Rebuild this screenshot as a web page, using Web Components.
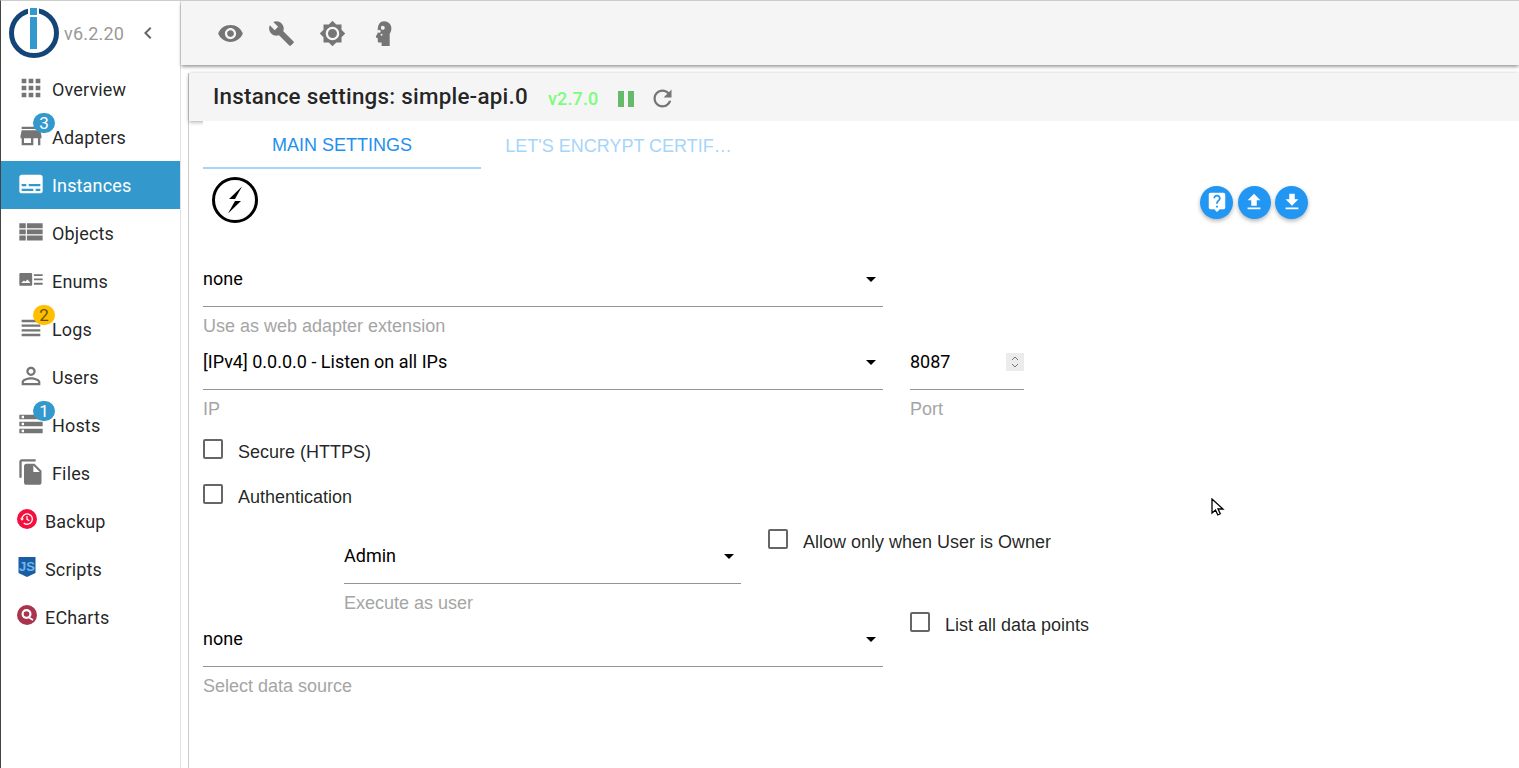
<!DOCTYPE html>
<html>
<head>
<meta charset="utf-8">
<title>Instance settings</title>
<style>
  html, body { margin: 0; height: 100%; }
  body { font-family: Roboto, "Liberation Sans", sans-serif; overflow: hidden; }
</style>
</head>
<body>
<x-app>
  <x-side slot="side">
    <x-nav label="Overview"><svg viewBox="0 0 24 24"><path d="M4 8h4V4H4v4zm6 12h4v-4h-4v4zm-6 0h4v-4H4v4zm0-6h4v-4H4v4zm6 0h4v-4h-4v4zm6-10v4h4V4h-4zm-6 4h4V4h-4v4zm6 6h4v-4h-4v4zm0 6h4v-4h-4v4z"/></svg></x-nav>
    <x-nav label="Adapters" badge="3"><svg viewBox="0 0 24 24"><path d="M20 4H4v2h16V4zm1 10v-2l-1-5H4l-1 5v2h1v6h10v-6h4v6h2v-6h1zm-9 4H6v-4h6v4z"/></svg></x-nav>
    <x-nav label="Instances" active><svg viewBox="0 0 24 24"><path d="M20 4H4c-1.1 0-2 .9-2 2v12c0 1.1.9 2 2 2h16c1.1 0 2-.9 2-2V6c0-1.1-.9-2-2-2zM4 12h4v2H4v-2zm10 6H4v-2h10v2zm6 0h-4v-2h4v2zm0-4H10v-2h10v2z"/></svg></x-nav>
    <x-nav label="Objects"><svg viewBox="0 0 24 24"><path d="M2 4.500h5.500v4.200H2zM8.500 4.500H22v4.200H8.500zM2 9.800h5.500V14H2zM8.500 9.800H22V14H8.500zM2 15.100h5.500v4.200H2zM8.500 15.100H22v4.200H8.500z"/></svg></x-nav>
    <x-nav label="Enums"><svg viewBox="0 0 24 24"><path fill-rule="evenodd" d="M3 6h9a1 1 0 0 1 1 1v9a1 1 0 0 1-1 1H3a1 1 0 0 1-1-1V7a1 1 0 0 1 1-1zM3.500 14.500h8L9 11.500l-2 2-1-1z"/><path d="M14.500 7H22v1.600h-7.500zM14.500 10.700H22v1.600h-7.500zM14.500 14.400H22V16h-7.500z"/></svg></x-nav>
    <x-nav label="Logs" badge="2" badge-color="warn"><svg viewBox="0 0 24 24"><path d="M4 15h16v-2H4v2zm0 4h16v-2H4v2zm0-8h16V9H4v2zm0-6v2h16V5H4z"/></svg></x-nav>
    <x-nav label="Users"><svg viewBox="0 0 24 24"><path d="M12 5.900c1.160 0 2.100.94 2.100 2.100s-.94 2.100-2.100 2.100S9.900 9.160 9.900 8s.94-2.100 2.100-2.100m0 9c2.970 0 6.100 1.460 6.100 2.100v1.100H5.900V17c0-.64 3.130-2.100 6.100-2.100M12 4C9.790 4 8 5.790 8 8s1.790 4 4 4 4-1.790 4-4-1.790-4-4-4zm0 9c-2.670 0-8 1.340-8 4v3h16v-3c0-2.660-5.330-4-8-4z"/></svg></x-nav>
    <x-nav label="Hosts" badge="1"><svg viewBox="0 0 24 24"><path d="M2 20h20v-4H2v4zm2-3h2v2H4v-2zM2 4v4h20V4H2zm4 3H4V5h2v2zm-4 7h20v-4H2v4zm2-3h2v2H4v-2z"/></svg></x-nav>
    <x-nav label="Files"><svg viewBox="0 0 24 24"><path d="M16 1H4c-1.100 0-2 .9-2 2v14h2V3h12V1zm-1 4l6 6v10c0 1.100-.9 2-2 2H7.990C6.890 23 6 22.100 6 21l.01-14c0-1.100.89-2 1.990-2h7zm-1 7h5.500L14 6.500V12z"/></svg></x-nav>
    <x-nav label="Backup" small><svg viewBox="0 0 20 20" style="fill:none"><circle cx="10" cy="10" r="10" fill="#f50f3e"/><path d="M5 10a5.200 5.200 0 1 1 1.700 3.900" stroke="#fff" stroke-width="1.300"/><path d="M3 9.400h4L5 11.800z" fill="#fff"/><path d="M10 7v3.400l2.400 1.300" stroke="#fff" stroke-width="1.200"/></svg></x-nav>
    <x-nav label="Scripts" small><svg viewBox="0 0 20 20"><path d="M1.500 0h17v16l-8.500 4-8.500-4z" fill="#1b5da3"/><text x="10" y="14" text-anchor="middle" font-family="Liberation Sans" font-weight="700" font-size="13" fill="#6db8f0">JS</text></svg></x-nav>
    <x-nav label="ECharts" small><svg viewBox="0 0 20 20"><circle cx="10" cy="10" r="10" fill="#aa344d"/><circle cx="9.500" cy="9" r="5" fill="#fff"/><circle cx="9.500" cy="9" r="2.800" fill="#aa344d"/><path d="M12 12.500l4 2.500" stroke="#fff" stroke-width="1.500"/></svg></x-nav>
  </x-side>
  <x-toolbar slot="toolbar">
    <svg viewBox="0 0 24 24"><path d="M12 4.500C7 4.500 2.730 7.610 1 12c1.730 4.390 6 7.500 11 7.500s9.270-3.110 11-7.500c-1.730-4.390-6-7.500-11-7.500zM12 17c-2.760 0-5-2.240-5-5s2.240-5 5-5 5 2.240 5 5-2.240 5-5 5zm0-8c-1.660 0-3 1.340-3 3s1.340 3 3 3 3-1.340 3-3-1.340-3-3-3z"/></svg>
    <svg viewBox="0 0 24 24"><path d="M22.700 19l-9.100-9.100c.9-2.300.4-5-1.500-6.900-2-2-5-2.400-7.400-1.300L9 6 6 9 1.600 4.700C.4 7.100.9 10.100 2.900 12.100c1.900 1.900 4.600 2.400 6.900 1.500l9.100 9.100c.4.4 1 .4 1.400 0l2.300-2.300c.5-.4.5-1.100.1-1.400z"/></svg>
    <svg viewBox="0 0 24 24"><path d="M20 8.690V4h-4.690L12 .69 8.690 4H4v4.690L.69 12 4 15.310V20h4.690L12 23.310 15.310 20H20v-4.690L23.310 12 20 8.690zM12 18c-3.310 0-6-2.690-6-6s2.690-6 6-6 6 2.690 6 6-2.690 6-6 6zm0-10c-2.210 0-4 1.790-4 4s1.790 4 4 4 4-1.790 4-4-1.790-4-4-4z"/></svg>
    <svg viewBox="0 0 24 24"><path fill-rule="evenodd" d="M12.500 1c3.700 0 6.500 2.700 6.500 6.300 0 2.300-.7 3.700-1.500 5V23H10.300v-2.900H8.200c-.9 0-1.300-.6-1.300-1.300v-2.600l-1.400-.7c-.4-.2-.4-.6-.2-1l1.600-2.900V8.500C6.900 4 9 1 12.500 1zM8.500 8.800a1.300 1.300 0 1 0 .1 2.500 1.300 1.300 0 0 0-.1-2.500zM11.800 5.300a1.700 1.700 0 1 0 .1 3.300 1.700 1.700 0 0 0-.1-3.300zM10.300 12.200a.8.8 0 1 0 0 1.700.8.8 0 0 0 0-1.700z"/></svg>
  </x-toolbar>
  <x-panel slot="main" heading="Instance settings: simple-api.0" version="v2.7.0">
    <x-tabs>
      <span active>MAIN SETTINGS</span>
      <span style="padding-right:3px">LET'S ENCRYPT CERTIF…</span>
    </x-tabs>
    <x-logobar>
      <x-fab><svg viewBox="0 0 24 24"><path d="M19 2H5c-1.110 0-2 .9-2 2v14c0 1.100.89 2 2 2h4l3 3 3-3h4c1.100 0 2-.9 2-2V4c0-1.100-.9-2-2-2zm-6 16h-2v-2h2v2zm2.070-7.750l-.9.92C13.450 11.900 13 12.500 13 14h-2v-.5c0-1.100.45-2.100 1.170-2.830l1.240-1.260c.37-.36.59-.86.59-1.410 0-1.100-.9-2-2-2s-2 .9-2 2H8c0-2.210 1.790-4 4-4s4 1.790 4 4c0 .88-.36 1.680-.93 2.250z"/></svg></x-fab>
      <x-fab><svg viewBox="0 0 24 24"><path d="M9 16h6v-6h4l-7-7-7 7h4zm-4 2h14v2H5z"/></svg></x-fab>
      <x-fab><svg viewBox="0 0 24 24"><path d="M19 9h-4V3H9v6H5l7 7 7-7zM5 18v2h14v-2H5z"/></svg></x-fab>
    </x-logobar>
    <x-form>
      <x-row><x-field value="none" label="Use as web adapter extension"></x-field></x-row>
      <x-row gap="27">
        <x-field value="[IPv4] 0.0.0.0 - Listen on all IPs" label="IP"></x-field>
        <x-field value="8087" label="Port" width="114" number></x-field>
      </x-row>
      <x-check label="Secure (HTTPS)" style="margin-top:14px"></x-check>
      <x-check label="Authentication" style="margin-top:23px"></x-check>
      <x-row gap="27" style="margin:30px 0 0 141px">
        <x-field value="Admin" label="Execute as user" width="397"></x-field>
        <x-check label="Allow only when User is Owner" style="margin-top:-7px"></x-check>
      </x-row>
      <x-row gap="27">
        <x-field value="none" label="Select data source"></x-field>
        <x-check label="List all data points" style="margin-top:-7px"></x-check>
      </x-row>
    </x-form>
  </x-panel>
</x-app>
<script>
const define = (name, css, html, setup) => {
  customElements.define(name, class extends HTMLElement {
    connectedCallback() {
      if (this.shadowRoot) return;
      this.attachShadow({ mode: 'open' });
      const a = n => this.getAttribute(n) || '';
      this.shadowRoot.innerHTML = `<style>${css}</style>` + (typeof html === 'function' ? html(a, this) : html);
      if (setup) setup(this);
    }
  });
};

define('x-app', `
  :host { display: grid; grid-template-columns: 180px 1fr; grid-template-rows: 64px 1fr; height: 100vh;
    border-top: 1px solid #ccc; border-left: 1px solid #444; box-sizing: border-box; background: #fff; overflow: hidden; }
  .side { grid-row: 1 / 3; display: block; }
  .bar { position: relative; z-index: 2; }
  .main { min-width: 0; }
`, `
  <div class="side"><slot name="side"></slot></div>
  <div class="bar"><slot name="toolbar"></slot></div>
  <div class="main"><slot name="main"></slot></div>
`);

define('x-side', `
  :host { display: block; width: 179px; height: 100%; border-right: 1px solid #e0e0e0; }
  header { height: 64px; display: flex; align-items: center; padding-left: 8px; box-sizing: border-box; }
  header svg.logo { width: 50px; height: 50px; flex: none; }
  header span { color: #999; font-size: 18px; margin-left: 5px; letter-spacing: .2px; }
  header svg.back { width: 24px; height: 24px; fill: #666; margin-left: 12px; }
`, `
  <header>
    <svg class="logo" viewBox="0 0 50 50">
      <circle cx="25" cy="25" r="22.500" fill="none" stroke="#144578" stroke-width="5"/>
      <rect x="19" y="0" width="11" height="7" fill="#fff"/>
      <rect x="21" y="0" width="7" height="7" fill="#39c"/>
      <rect x="21" y="9" width="7" height="32" fill="#39c"/>
    </svg>
    <span>v6.2.20</span>
    <svg class="back" viewBox="0 0 24 24"><path d="M15.410 7.410 14 6l-6 6 6 6 1.410-1.410L10.830 12z"/></svg>
  </header>
  <slot></slot>
`);

define('x-nav', `
  :host { display: flex; height: 48px; align-items: center; position: relative; color: rgba(0,0,0,.87); box-sizing: border-box; }
  :host([active]) { background: #39c; color: #fff; }
  .ic { width: 28px; height: 28px; margin: -3px 7px 0 16px; flex: none; fill: #757575; }
  :host([active]) .ic { fill: #fff; }
  :host([small]) .ic { width: 20px; height: 20px; margin: -4px 8px 0 16px; }
  .ic ::slotted(svg) { display: block; width: 100%; height: 100%; fill: inherit; }
  .t { font-size: 18px; letter-spacing: .15px; }
  .b { position: absolute; left: 32px; top: 0; width: 22px; height: 20px; border-radius: 11px; background: #39c; color: #fff;
    font-size: 17px; line-height: 20px; text-align: center; }
  .b.warn { background: #ffbf00; color: #6b5200; }
`, (a, el) => `
  <div class="ic"><slot></slot></div>
  <span class="t">${a('label')}</span>
  ${a('badge') ? `<span class="b ${a('badge-color')}">${a('badge')}</span>` : ''}
`);

define('x-toolbar', `
  :host { display: flex; align-items: center; gap: 24px; height: 64px; padding-left: 36px; box-sizing: border-box; background: #f5f5f5;
    box-shadow: 0 2px 4px -1px rgba(0,0,0,.3), 0 2px 3px rgba(0,0,0,.2); }
  ::slotted(svg) { width: 27px; height: 27px; fill: #757575; display: block; }
`, `<slot></slot>`);

define('x-panel', `
  :host { display: block; margin: 8px 0 0 7px; border-left: 1px solid #ccc; height: calc(100% - 8px); }
  .title { height: 48px; background: #f5f5f5; display: flex; align-items: center; padding-left: 24px; border-top-left-radius: 4px;
    box-shadow: 0 1px 4px rgba(0,0,0,.35); }
  h1 { margin: -2px 0 0; font-size: 22.400px; font-weight: 500; color: rgba(0,0,0,.87); letter-spacing: .23px; }
  .v { font-size: 18px; font-weight: 500; color: #7cfc7c; margin: 2px 0 0 20px; letter-spacing: .15px; }
  .pause { width: 16px; height: 16px; margin: 3px 0 0 20px; display: flex; justify-content: space-between; }
  .pause i { width: 6px; background: #66bb6a; }
  svg { width: 27px; height: 27px; margin: 2px 0 0 15px; fill: #757575; }
  .body { margin-left: 14px; background: #fff; position: relative; }
`, a => `
  <div class="title">
    <h1>${a('heading')}</h1><span class="v">${a('version')}</span>
    <div class="pause"><i></i><i></i></div>
    <svg viewBox="0 0 24 24"><path d="M17.650 6.350C16.200 4.900 14.210 4 12 4c-4.420 0-7.990 3.580-7.990 8s3.570 8 7.990 8c3.730 0 6.840-2.550 7.730-6h-2.080c-.82 2.330-3.040 4-5.650 4-3.310 0-6-2.690-6-6s2.690-6 6-6c1.660 0 3.140.69 4.220 1.780L13 11h7V4l-2.350 2.350z"/></svg>
  </div>
  <div class="body"><slot></slot></div>
`);

define('x-tabs', `
  :host { display: grid; grid-template-columns: 278px 278px; height: 48px; }
  ::slotted(span) { display: flex; align-items: center; justify-content: center; font: 18px "Liberation Sans", Arial, sans-serif; color: #a6d5fa; box-sizing: border-box; white-space: nowrap; padding-top: 3px; }
  ::slotted(span[active]) { color: #1e90f0; border-bottom: 2px solid #a6d5fa; }
`, `<slot></slot>`);

define('x-logobar', `
  :host { display: flex; align-items: center; width: 1105px; height: 91px; box-sizing: border-box; padding: 8px 0 37px 9px; gap: 4.500px; }
  svg { width: 46px; height: 46px; flex: none; margin-right: auto; }
`, `
  <svg viewBox="0 0 46 46">
    <circle cx="23" cy="23" r="21.500" fill="none" stroke="#000" stroke-width="3"/>
    <path d="M30 9.500 17 22h6zM16 36.500 29 24h-6z" fill="#000"/>
  </svg>
  <slot></slot>
`);

define('x-fab', `
  :host { display: flex; align-items: center; justify-content: center; width: 33px; height: 33px; border-radius: 50%; background: #2196f3;
    box-shadow: 0 2px 4px rgba(0,0,0,.3); margin-top: 4px; }
  ::slotted(svg) { width: 22px; height: 22px; fill: #fff; }
`, `<slot></slot>`);

define('x-form', `:host { display: block; }`, `<slot></slot>`);

define('x-row', `:host { display: flex; align-items: flex-start; }
  .r { display: flex; align-items: flex-start; }`, (a) => `<div class="r" style="gap:${a('gap') || 0}px"><slot></slot></div>`);

define('x-field', `
  :host { display: block; flex: none; height: 83px; box-sizing: border-box; color: #000; }
  .in { height: 46px; border-bottom: 1px solid #949494; display: flex; align-items: flex-start; justify-content: space-between; }
  .val { font-size: 18px; line-height: 38px; }
  .arrow { width: 0; height: 0; border: 5px solid transparent; border-top-color: #000; border-bottom: 0; margin: 17px 7px 0 0; }
  .spin { width: 18px; height: 18px; background: #ececec; margin: 10px 0 0 0; }
  .spin svg { display: block; width: 18px; height: 18px; fill: none; stroke: #777; }
  .help { font: 18px/20px "Liberation Sans", Arial, sans-serif; color: #a5a5a5; margin-top: 9px; }
`, (a, el) => {
  el.style.width = (a('width') || 680) + 'px';
  const ctl = el.hasAttribute('number')
    ? `<span class="spin"><svg viewBox="0 0 18 18"><path d="M6 7l3-3 3 3M6 11l3 3 3-3"/></svg></span>`
    : `<span class="arrow"></span>`;
  return `<div class="in"><span class="val">${a('value')}</span>${ctl}</div><div class="help">${a('label')}</div>`;
});

define('x-check', `
  :host { display: flex; align-items: flex-start; flex: none; color: rgba(0,0,0,.87); }
  i { width: 16px; height: 16px; border: 2px solid #666; border-radius: 2px; flex: none; margin-top: -1px; }
  span { font: 18px/20px "Liberation Sans", Arial, sans-serif; margin: 2px 0 0 15px; white-space: nowrap; }
`, a => `<i></i><span>${a('label')}</span>`);
</script>
<svg style="position:absolute;left:1211px;top:498px;width:14px;height:20px" viewBox="0 0 14 20"><path d="M1 1v14l3.500-3 2.300 5 2.500-1.200-2.300-4.800H12z" fill="#fff" stroke="#000" stroke-width="1.300"/></svg>
</body>
</html>
